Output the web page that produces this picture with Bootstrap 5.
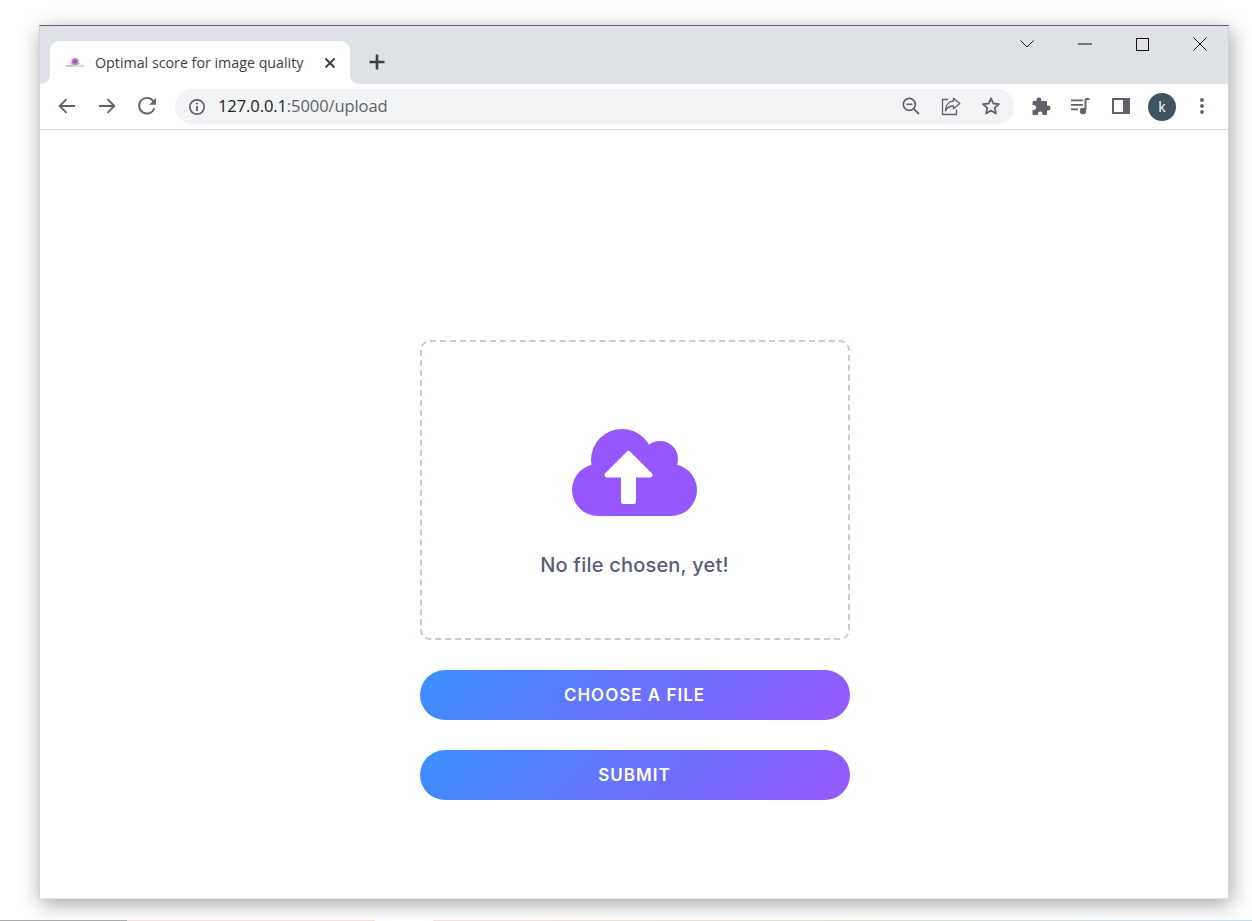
<!DOCTYPE html>
<html lang="en">
<head>
<meta charset="utf-8">
<title>Optimal score for image quality</title>
<link href="https://cdn.jsdelivr.net/npm/bootstrap@5.3.0/dist/css/bootstrap.min.css" rel="stylesheet">
<style>
html,body{height:921px;overflow:hidden;background:#fff}
.desk{height:921px;padding-top:25px}
.win{width:1190px;height:874px;margin-left:39px;background:#fff;border-top:1px solid #5f6368;border-left:1px solid #d5d5d5;border-right:1px solid #d5d5d5;border-bottom:1px solid #e4e4e4;box-shadow:2px 5px 20px rgba(0,0,0,.36)}
.tabstrip{height:58px;background:#dee1e6;padding-left:10px}
.tabitem{width:300px;height:43px;margin-top:15px;background:#fff;border-radius:9px 9px 0 0;padding-left:15px;padding-right:14px;position:relative}
.tabitem::before,.tabitem::after{content:"";position:absolute;bottom:0;width:9px;height:9px}
.tabitem::before{left:-9px;background:radial-gradient(circle at 0 0,#dee1e6 8.5px,#fff 9px)}
.tabitem::after{right:-9px;background:radial-gradient(circle at 100% 0,#dee1e6 8.5px,#fff 9px)}
.tabtitle{font:14.25px "Open Sans",sans-serif;color:#3c4043;margin-left:10px;white-space:nowrap}
.newtab{margin-left:16px;margin-top:25px;width:22px;height:22px}
.winctl{width:57.5px;height:36px}
.winctls{margin-right:-1px}
.chev{margin-right:0}
.toolbar{height:45px;padding:0 6px 0 7px;border-bottom:1px solid #dadce0;box-sizing:content-box}
.tbtn{width:40px;height:40px;flex:none}
.nudge{padding-bottom:2px}
.lft1{margin-right:2px}
.lft2{margin-right:4px}
.omni{height:35px;border-radius:18px;background:#f1f3f4;margin-left:8px;margin-right:8px;padding-left:13px;padding-right:3px}
.urltxt{font:16.55px/22px "Open Sans",sans-serif;color:#202124;margin-left:12px;letter-spacing:-.1px;padding-bottom:2px}
.urlmut{color:#5f6368}
.avatar{width:28px;height:28px;border-radius:50%;background:#3f5561;color:#fff;font:14px "Open Sans",sans-serif}
.stage{padding-top:210px;padding-left:1px}
.upl{width:430px}
.dropz{height:300px;border:2px dashed #c2cdda;border-radius:10px;padding-top:26px}
.cloudic{width:125px;height:87px;margin-bottom:37px}
.nofile{font:450 20px "Inter",sans-serif;color:#5b5b7b;letter-spacing:.2px;line-height:24px}
.gradbtn{height:50px;margin-top:30px;width:100%;border:0;border-radius:25px;color:#fff;background:linear-gradient(135deg,#3a8ffe 0%,#9658fe 100%);font:600 17px "Inter",sans-serif;letter-spacing:1px;text-transform:uppercase}
.gradbtn:hover,.gradbtn:active{color:#fff;background:linear-gradient(135deg,#3a8ffe 0%,#9658fe 100%)}
.stripe{height:1px;margin-top:21px;background:linear-gradient(90deg,#aaa 0 127px,#f5dfdb 127px 375px,#fff 375px 433px,#f3e0dc 433px,#dfe0cc 800px,#c8dde8 1252px)}
</style>
</head>
<body>
<div class="desk">
<div class="win d-flex flex-column">
  <div class="tabstrip d-flex align-items-start">
    <div class="tabitem d-flex align-items-center">
      <svg width="20" height="20" viewBox="0 0 20 20"><circle cx="10" cy="8.5" r="3.600" fill="#c07cc4"/><circle cx="10" cy="8.500" r="1.500" fill="#8a4a9a"/><path d="M5 10.500q5 3 10 0" stroke="#9aa0b0" stroke-width=".8" fill="none"/><path d="M1 13h7" stroke="#8b8f9c" stroke-width="1"/><path d="M8 13h11" stroke="#e2a0b0" stroke-width="1"/></svg>
      <span class="tabtitle flex-grow-1">Optimal score for image quality</span>
      <svg width="12" height="12" viewBox="0 0 12 12"><path d="M1.500 1.500l9 9M10.500 1.500l-9 9" stroke="#3c4043" stroke-width="1.900"/></svg>
    </div>
    <svg class="newtab" viewBox="0 0 22 22"><path d="M11 3.500v15M3.500 11h15" stroke="#3c4043" stroke-width="2.600"/></svg>
    <div class="winctls d-flex ms-auto">
      <div class="winctl d-flex align-items-center justify-content-center"><svg class="lft1" width="14" height="8" viewBox="0 0 14 8"><path d="M.5.5L7 7l6.500-6.500" stroke="#222" fill="none"/></svg></div>
      <div class="winctl d-flex align-items-center justify-content-center"><svg width="14" height="2" viewBox="0 0 14 2"><path d="M0 1h14" stroke="#111" stroke-width="1"/></svg></div>
      <div class="winctl d-flex align-items-center justify-content-center"><svg width="13" height="13" viewBox="0 0 13 13"><rect x=".5" y=".5" width="12" height="12" fill="none" stroke="#111"/></svg></div>
      <div class="winctl d-flex align-items-center justify-content-center"><svg width="14" height="14" viewBox="0 0 14 14"><path d="M.5.5l13 13M13.500.5l-13 13" stroke="#111"/></svg></div>
    </div>
  </div>
  <div class="toolbar d-flex align-items-center">
    <div class="tbtn nudge d-flex align-items-center justify-content-center"><svg width="20" height="20" viewBox="0 0 20 20"><path d="M18 10H3M9.500 3.200L2.700 10l6.800 6.800" stroke="#5f6368" stroke-width="1.900" fill="none"/></svg></div>
    <div class="tbtn nudge d-flex align-items-center justify-content-center"><svg width="20" height="20" viewBox="0 0 20 20"><path d="M2 10h15M10.500 3.200l6.800 6.800-6.800 6.800" stroke="#5f6368" stroke-width="1.900" fill="none"/></svg></div>
    <div class="tbtn nudge d-flex align-items-center justify-content-center"><svg width="20" height="20" viewBox="0 0 20 20"><path d="M17.300 12.200A7.800 7.800 0 1 1 16.500 5.500" stroke="#5f6368" stroke-width="1.900" fill="none"/><path d="M19 2v6.800h-6.800z" fill="#5f6368"/></svg></div>
    <div class="omni d-flex align-items-center flex-grow-1">
      <svg width="18" height="18" viewBox="0 0 18 18"><circle cx="9" cy="9" r="7.200" stroke="#5f6368" stroke-width="1.700" fill="none"/><path d="M9 8v5" stroke="#5f6368" stroke-width="1.800"/><circle cx="9" cy="5.500" r="1.100" fill="#5f6368"/></svg>
      <span class="urltxt flex-grow-1">127.0.0.1<span class="urlmut">:5000/upload</span></span>
      <div class="tbtn nudge d-flex align-items-center justify-content-center"><svg width="20" height="20" viewBox="0 0 20 20"><circle cx="8.300" cy="8.300" r="6" stroke="#5f6368" stroke-width="1.700" fill="none"/><path d="M12.800 12.800L18 18" stroke="#5f6368" stroke-width="1.900"/><path d="M5.300 8.300h6" stroke="#5f6368" stroke-width="1.600"/></svg></div>
      <div class="tbtn nudge d-flex align-items-center justify-content-center"><svg width="20" height="20" viewBox="0 0 20 20"><path d="M7 3.500H1.500v15h14V13.500" stroke="#5f6368" stroke-width="1.300" fill="none"/><path d="M12.500 2.300L18.800 7.500l-6.300 5.200V10C8.500 10 6 11.500 4.500 15 4.500 9.500 7.500 5.500 12.500 5z" stroke="#5f6368" stroke-width="1.300" fill="none" stroke-linejoin="round"/></svg></div>
      <div class="tbtn nudge d-flex align-items-center justify-content-center"><svg width="20" height="20" viewBox="0 0 20 20"><path d="M10 2.300l2.300 5.200 5.700.6-4.300 3.800 1.200 5.600-4.900-2.900-4.900 2.900 1.200-5.600L2 8.100l5.700-.6z" stroke="#5f6368" stroke-width="1.800" fill="none" stroke-linejoin="round"/></svg></div>
    </div>
    <div class="tbtn nudge d-flex align-items-center justify-content-center"><svg class="lft1" width="20" height="20" viewBox="0 0 20 20"><path d="M8 1.500a2.400 2.400 0 0 1 2.400 2.400V5H15a1 1 0 0 1 1 1v3.500h1a2.500 2.500 0 0 1 0 5h-1V18a1 1 0 0 1-1 1h-3.500v-1.200a2.300 2.300 0 0 0-4.600 0V19H2.500a1 1 0 0 1-1-1v-4h1.200a2.500 2.500 0 0 0 0-5H1.500V6a1 1 0 0 1 1-1h3V3.900A2.400 2.400 0 0 1 8 1.500z" fill="#5f6368"/></svg></div>
    <div class="tbtn nudge d-flex align-items-center justify-content-center"><svg class="lft2" width="20" height="20" viewBox="0 0 20 20"><path d="M1 4.300h12M1 8.800h12M1 13.300h7" stroke="#5f6368" stroke-width="1.700"/><path d="M15.500 3v11" stroke="#5f6368" stroke-width="2"/><path d="M15.500 3h4" stroke="#5f6368" stroke-width="2"/><circle cx="13" cy="15" r="3.200" fill="#5f6368"/></svg></div>
    <div class="tbtn nudge d-flex align-items-center justify-content-center"><svg class="lft1" width="18" height="16" viewBox="0 0 18 16"><rect width="18" height="16" fill="#5f6368"/><rect x="2" y="2" width="9" height="12" fill="#fff"/></svg></div>
    <div class="tbtn d-flex align-items-center justify-content-center"><div class="avatar d-flex align-items-center justify-content-center">k</div></div>
    <div class="tbtn nudge d-flex align-items-center justify-content-center"><svg width="6" height="18" viewBox="0 0 6 18"><circle cx="3" cy="3" r="1.900" fill="#5f6368"/><circle cx="3" cy="9" r="1.900" fill="#5f6368"/><circle cx="3" cy="15" r="1.900" fill="#5f6368"/></svg></div>
  </div>
  <main class="stage d-flex justify-content-center">
    <div class="upl">
      <div class="dropz d-flex flex-column align-items-center justify-content-center">
        <svg class="cloudic" viewBox="0 0 125 87"><g fill="#9658fe"><circle cx="50" cy="31" r="31"/><circle cx="88" cy="30" r="18"/><circle cx="26" cy="61" r="26"/><circle cx="99" cy="61" r="26"/><rect x="26" y="35" width="73" height="52"/></g><path d="M56.500 24.500L35 46H51.500V72.500H61.500V46H78Z" fill="#fff" stroke="#fff" stroke-width="5" stroke-linejoin="round"/></svg>
        <div class="nofile">No file chosen, yet!</div>
      </div>
      <button type="button" class="btn gradbtn d-block p-0">Choose a file</button>
      <button type="button" class="btn gradbtn d-block p-0">Submit</button>
    </div>
  </main>
</div>
<div class="stripe"></div>
</div>
</body>
</html>
